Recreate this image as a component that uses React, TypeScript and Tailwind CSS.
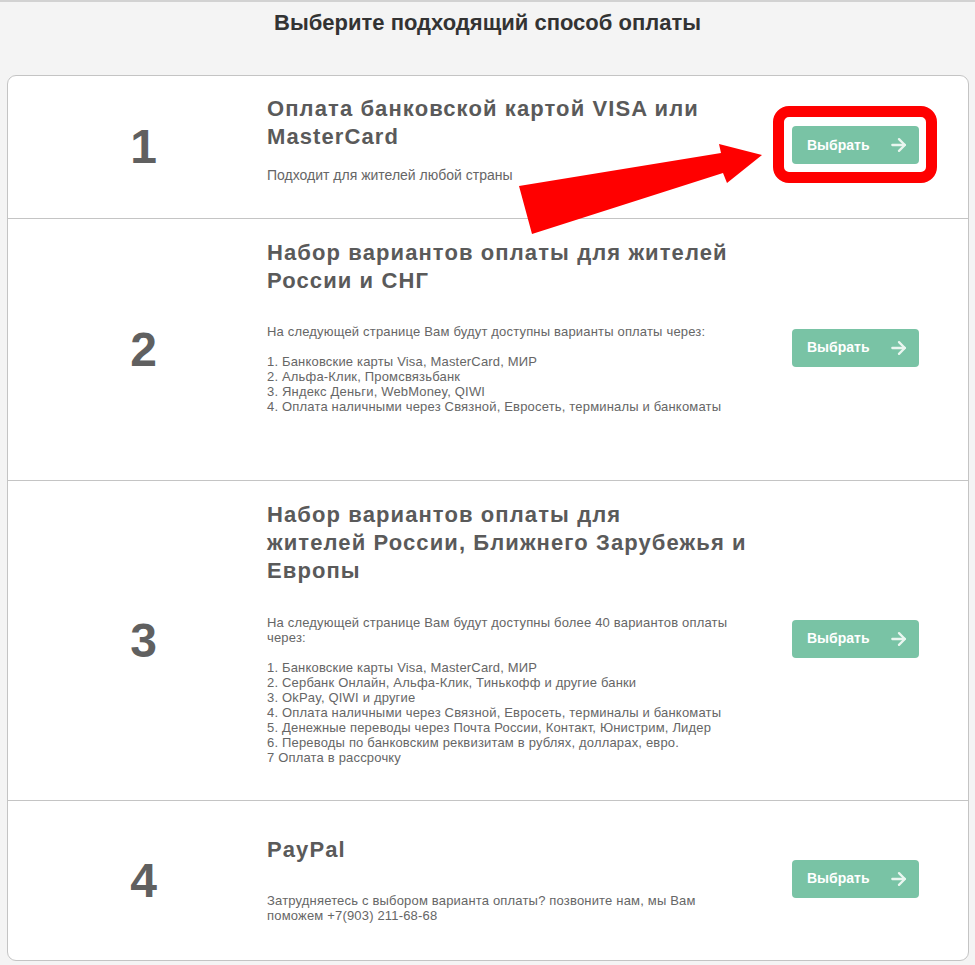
import React from "react";

const font = { fontFamily: '"Liberation Sans", Arial, sans-serif' };

function ArrowIcon() {
  return (
    <svg width="20" height="20" viewBox="0 0 24 24" fill="none" stroke="#eaf6f0" strokeWidth="2.8" strokeLinecap="round" strokeLinejoin="round">
      <path d="M4 12h15" />
      <path d="m12 5 7 7-7 7" />
    </svg>
  );
}

function SelectButton({ highlight }: { highlight?: boolean }) {
  return (
    <div className="relative mb-[4px] w-[127px]">
      {highlight && (
        <div className="absolute left-[-19px] right-[-18px] top-[-20px] bottom-[-19px] rounded-[16px] border-[11px] border-[#ff0000]" />
      )}
      <button className="relative flex h-[38px] w-[127px] items-center justify-between rounded-[4px] bg-[#79c3a5] pl-[15px] pr-[10px] text-[14px] font-bold text-white">
        <span>Выбрать</span>
        <ArrowIcon />
      </button>
    </div>
  );
}

type Row = {
  n: string;
  title: string[];
  body: string[];
  pt: string;
  pb: string;
  mt: string;
  small?: boolean;
};

function PaymentRow({ n, title, body, pt, pb, mt, small, highlight, last }: Row & { highlight?: boolean; last?: boolean }) {
  return (
    <div className={`flex ${last ? "" : "border-b border-[#c4c4c4]"}`}>
      <div className="flex w-[259px] items-center justify-center pl-[12px] text-[48px] font-bold leading-none text-[#606060]">
        {n}
      </div>
      <div className={`w-[500px] ${pt} ${pb}`}>
        <div className="text-[22px] font-bold leading-[28px] tracking-[1.1px] text-[#5a5a5a]">
          {title.map((t, i) => (
            <div key={i} className="whitespace-nowrap">{t}</div>
          ))}
        </div>
        {small ? (
          <div className={`${mt} text-[14px] leading-[20px] text-[#666666]`}>
            {body.map((t, i) => (
              <div key={i} className="whitespace-nowrap">{t}</div>
            ))}
          </div>
        ) : (
          <div className={`${mt} text-[13px] leading-[15px] tracking-[0.18px] text-[#666666]`}>
            {body.map((t, i) => (
              <div key={i} className="h-[15px] whitespace-nowrap">{t}</div>
            ))}
          </div>
        )}
      </div>
      <div className="flex flex-1 items-center pl-[25px]">
        <SelectButton highlight={highlight} />
      </div>
    </div>
  );
}

export default function App() {
  const rows: Row[] = [
    {
      n: "1",
      title: ["Оплата банковской картой VISA или", "MasterCard"],
      body: ["Подходит для жителей любой страны"],
      pt: "pt-[19px]",
      pb: "pb-[33px]",
      mt: "mt-[14px]",
      small: true,
    },
    {
      n: "2",
      title: ["Набор вариантов оплаты для жителей", "России и СНГ"],
      body: [
        "На следующей странице Вам будут доступны варианты оплаты через:",
        "",
        "1. Банковские карты Visa, MasterCard, МИР",
        "2. Альфа-Клик, Промсвязьбанк",
        "3. Яндекс Деньги, WebMoney, QIWI",
        "4. Оплата наличными через Связной, Евросеть, терминалы и банкоматы",
      ],
      pt: "pt-[20px]",
      pb: "pb-[66px]",
      mt: "mt-[29px]",
    },
    {
      n: "3",
      title: ["Набор вариантов оплаты для", "жителей России, Ближнего Зарубежья и", "Европы"],
      body: [
        "На следующей странице Вам будут доступны более 40 вариантов оплаты",
        "через:",
        "",
        "1. Банковские карты Visa, MasterCard, МИР",
        "2. Сербанк Онлайн, Альфа-Клик, Тинькофф и другие банки",
        "3. OkPay, QIWI и другие",
        "4. Оплата наличными через Связной, Евросеть, терминалы и банкоматы",
        "5. Денежные переводы через Почта России, Контакт, Юнистрим, Лидер",
        "6. Переводы по банковским реквизитам в рублях, долларах, евро.",
        "7 Оплата в рассрочку",
      ],
      pt: "pt-[20px]",
      pb: "pb-[35px]",
      mt: "mt-[30px]",
    },
    {
      n: "4",
      title: ["PayPal"],
      body: [
        "Затрудняетесь с выбором варианта оплаты? позвоните нам, мы Вам",
        "поможем +7(903) 211-68-68",
      ],
      pt: "pt-[35px]",
      pb: "pb-[37px]",
      mt: "mt-[29px]",
    },
  ];

  return (
    <div className="relative min-h-[965px] w-full border-t-2 border-[#d2d2d2] bg-[#f4f4f4] pb-[5px]" style={font}>
      <div className="flex h-[73px] justify-center pt-[9px]">
        <h1 className="text-[22px] font-bold leading-[24px] text-[#333333]">Выберите подходящий способ оплаты</h1>
      </div>
      <div className="ml-[7px] mr-[6px] rounded-[9px] border border-[#c4c4c4] bg-white">
        {rows.map((r, i) => (
          <PaymentRow key={r.n} {...r} highlight={i === 0} last={i === rows.length - 1} />
        ))}
      </div>
      <svg className="pointer-events-none absolute left-0 top-0" width="975" height="965" viewBox="0 0 975 965">
        <polygon
          points="519,184 721,151 719,142 762,153 727,181 723,171 532,232"
          fill="#ff0000"
        />
      </svg>
    </div>
  );
}
